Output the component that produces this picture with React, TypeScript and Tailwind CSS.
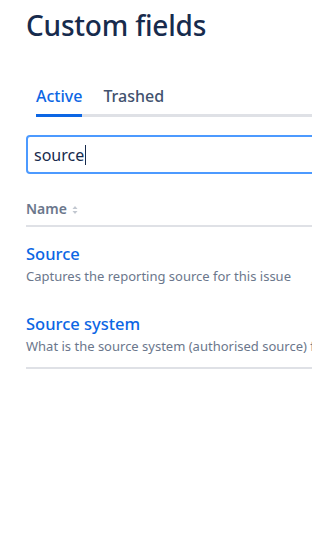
import React from "react";

const fields = [
  { name: "Source", description: "Captures the reporting source for this issue" },
  {
    name: "Source system",
    description: "What is the source system (authorised source) for this issue",
  },
];

export default function App() {
  return (
    <main
      className="h-[547px] w-[312px] overflow-hidden bg-white text-[#172b4d]"
      style={{ fontFamily: '"Noto Sans", "Open Sans", sans-serif' }}
    >
      <div className="w-[640px] pl-[26px]">
        <h1 className="pt-[8px] text-[28px] font-medium leading-[34px] tracking-[-0.2px]">
          Custom fields
        </h1>

        <div className="mt-[44px] flex items-end pl-[10px]">
          <div className="flex w-full border-b-[3px] border-[#dfe1e6]">
            <button className="-mb-[3px] border-b-[3px] border-[#0c66e4] pb-[8px] text-[16px] font-medium leading-[20px] text-[#0c66e4]">
              Active
            </button>
            <button className="ml-[21px] pb-[8px] text-[16px] font-medium leading-[20px] text-[#42526e]">
              Trashed
            </button>
          </div>
        </div>

        <div className="mt-[18px] flex h-[39px] items-center rounded-[4px] border-2 border-[#4c9aff] px-[6px]">
          <span className="text-[16px] leading-[20px] text-[#172b4d]">source</span>
          <span className="ml-px h-[20px] w-px bg-[#172b4d]" />
        </div>

        <div className="mt-[26px] flex items-center gap-[5px] border-b-2 border-[#dfe1e6] pb-[7px]">
          <span className="text-[14px] font-semibold leading-[18px] text-[#6b778c]">Name</span>
          <svg width="6" height="10" viewBox="0 0 6 10" className="mt-px">
            <path d="M3 1 L5.5 4 H0.5 Z" fill="#c1c7d0" />
            <path d="M3 9 L5.5 6 H0.5 Z" fill="#c1c7d0" />
          </svg>
        </div>

        <div className="border-b-2 border-[#dfe1e6]">
          {fields.map((field) => (
            <div key={field.name} className="pt-[16px] pb-[10px]">
              <a className="block text-[16.5px] font-medium leading-[22px] text-[#0c66e4]">
                {field.name}
              </a>
              <p className="whitespace-nowrap text-[13px] leading-[22px] text-[#6b778c]">
                {field.description}
              </p>
            </div>
          ))}
        </div>
      </div>
    </main>
  );
}
